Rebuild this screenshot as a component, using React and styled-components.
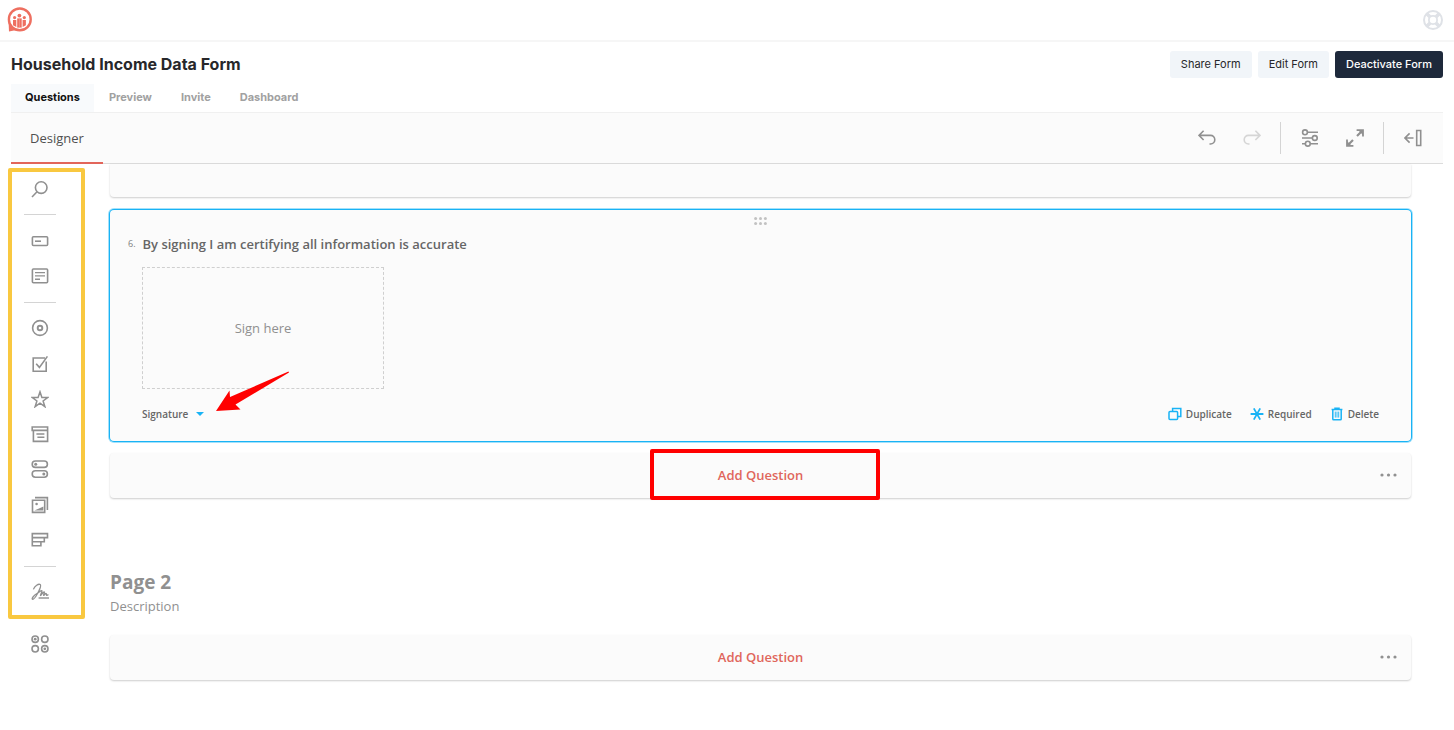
import React from 'react';
import styled, { createGlobalStyle, css } from 'styled-components';

const GlobalStyle = createGlobalStyle`
  * {
    box-sizing: border-box;
  }

  body {
    margin: 0;
    background: #fff;
    color: #27272a;
    font-family: Inter, sans-serif;
  }

  button {
    border: 0;
    padding: 0;
    background: none;
    font: inherit;
    color: inherit;
    cursor: pointer;
  }

  svg {
    display: block;
  }
`;

const surveyFont = css`
  font-family: 'Open Sans', sans-serif;
`;

const TopBar = styled.header`
  display: flex;
  align-items: center;
  justify-content: space-between;
  height: 42px;
  padding: 0 11px 0 7px;
  border-bottom: 2px solid #f6f6f6;
`;

const Page = styled.main`
  padding: 0 11px;
`;

const TitleRow = styled.div`
  display: flex;
  align-items: center;
  justify-content: space-between;
  height: 42px;
  padding-top: 2px;
`;

const Title = styled.h1`
  margin: 0;
  font-size: 16px;
  line-height: 24px;
  font-weight: 700;
`;

const Actions = styled.div`
  display: flex;
  gap: 6px;
`;

const ActionButton = styled.button`
  height: 27px;
  padding: 0 11px;
  border-radius: 3px;
  font-size: 11px;
  font-weight: ${props => (props.$dark ? 500 : 400)};
  background: ${props => (props.$dark ? '#1e293b' : '#f1f5f9')};
  color: ${props => (props.$dark ? '#fff' : '#27272a')};
`;

const Tabs = styled.nav`
  display: flex;
  gap: 1px;
  height: 28px;
`;

const Tab = styled.a`
  padding: 0 14px;
  font-size: 11px;
  line-height: 27px;
  font-weight: 700;
  text-decoration: none;
  color: ${props => (props.$active ? '#111' : '#a1a1a1')};
  background: ${props => (props.$active ? '#f8fafc' : 'transparent')};
`;

const Toolbar = styled.div`
  ${surveyFont}
  display: flex;
  justify-content: space-between;
  height: 52px;
  background: #fbfbfb;
  border-top: 1px solid #f0f0f0;
  border-bottom: 1px solid #dcdcdc;
`;

const DesignerTab = styled.button`
  margin-bottom: -1px;
  padding: 0 19px;
  border-bottom: 2px solid #e2655a;
  font-size: 13px;
  color: #505050;
`;

const Tools = styled.div`
  display: flex;
  align-items: center;
  padding-right: 8px;
`;

const ToolButton = styled.button`
  display: flex;
  justify-content: center;
  width: 45px;
  color: #909090;
  opacity: ${props => (props.disabled ? 0.35 : 1)};
`;

const ToolDivider = styled.span`
  width: 1px;
  height: 32px;
  margin: 0 6px;
  background: #d4d4d4;
`;

const Workspace = styled.div`
  ${surveyFont}
  display: flex;
`;

const Sidebar = styled.aside`
  position: relative;
  flex: 0 0 98px;
  padding: 7px 0 0 13px;
`;

const Toolbox = styled.nav`
  display: flex;
  flex-direction: column;
  width: 32px;
  height: 491px;
`;

const ToolboxItem = styled.button`
  display: flex;
  flex: 1;
  align-items: center;
  justify-content: center;
  color: #909090;
`;

const ToolboxDivider = styled.hr`
  width: 100%;
  height: 1px;
  margin: 8px 0;
  border: 0;
  background: #d4d4d4;
`;

const YellowFrame = styled.div`
  position: absolute;
  top: 4px;
  left: -3px;
  width: 77px;
  height: 451px;
  border: 4px solid #f9c840;
  border-radius: 2px;
  pointer-events: none;
`;

const Canvas = styled.section`
  flex: 1;
  min-width: 0;
  padding: 0 31px 40px 0;
`;

const PreviousCard = styled.div`
  height: 33px;
  margin: 0 1px;
  background: #fbfbfb;
  border-radius: 0 0 4px 4px;
  box-shadow: 0 1px 2px rgba(0, 0, 0, 0.2);
`;

const QuestionCard = styled.article`
  position: relative;
  margin: 13px 1px 12px;
  padding: 7px 32px 17px 32px;
  background: #fbfbfb;
  border-radius: 4px;
  box-shadow: 0 0 0 1px #19b3f5, 0 0 0 2px rgba(25, 179, 245, 0.4);
`;

const DragHandle = styled.button`
  display: block;
  margin: 0 auto;
  color: #c2c2c2;
`;

const QuestionTitle = styled.h2`
  display: flex;
  align-items: center;
  gap: 7px;
  margin: 9px 0 13px -14px;
  font-size: 13px;
  line-height: 20px;
  font-weight: 600;
  color: #666;
`;

const QuestionNumber = styled.span`
  font-size: 9px;
  font-weight: 400;
  color: #808080;
`;

const SignBox = styled.div`
  display: flex;
  align-items: center;
  justify-content: center;
  width: 242px;
  height: 122px;
  border: 1px dashed #cfcfcf;
  font-size: 13px;
  color: #909090;
`;

const CardFooter = styled.footer`
  display: flex;
  align-items: center;
  justify-content: space-between;
  height: 20px;
  margin-top: 15px;
`;

const TypeButton = styled.button`
  display: flex;
  align-items: center;
  gap: 8px;
  font-size: 10px;
  font-weight: 600;
  color: #666;
`;

const CardActions = styled.div`
  display: flex;
  gap: 18px;
`;

const CardAction = styled.button`
  display: flex;
  align-items: center;
  gap: 4px;
  font-size: 10px;
  font-weight: 600;
  color: #666;

  svg {
    color: #19b3f5;
  }
`;

const AddBar = styled.div`
  position: relative;
  display: grid;
  grid-template-columns: 1fr auto 1fr;
  align-items: center;
  height: 45px;
  margin: 0 1px;
  padding: 0 14px 1px;
  background: #fbfbfb;
  border-radius: 4px;
  box-shadow: 0 1px 2px rgba(0, 0, 0, 0.2);
`;

const AddButton = styled.button`
  grid-column: 2;
  font-size: 13px;
  font-weight: 600;
  color: #e0665c;
`;

const MoreButton = styled.button`
  justify-self: end;
  color: #909090;
`;

const RedFrame = styled.div`
  position: absolute;
  top: -4px;
  left: calc(50% - 111px);
  width: 230px;
  height: 51px;
  border: 4px solid #f00;
  border-radius: 2px;
  pointer-events: none;
`;

const RedArrow = styled.svg`
  position: absolute;
  top: 161px;
  left: 106px;
  pointer-events: none;
`;

const PageHeading = styled.div`
  margin: 70px 0 18px 1px;
  color: #909090;

  h2 {
    margin: 0;
    font-size: 19px;
    line-height: 28px;
    font-weight: 700;
  }

  p {
    margin: 0;
    font-size: 13px;
    line-height: 21px;
  }
`;

const Icon = ({ children, size = 18 }) => (
  <svg width={size} height={size} viewBox="0 0 18 18" fill="none" stroke="currentColor" strokeWidth="1.6" aria-hidden="true">
    {children}
  </svg>
);

const Logo = () => (
  <svg width="25" height="26" viewBox="0 0 25 26" aria-label="Logo">
    <circle cx="12.8" cy="12.4" r="10.9" fill="none" stroke="#ee6f60" strokeWidth="2.4" />
    <path d="M1.6 15.5 2 24.6l7.5-1.5-4-3.6z" fill="#ee6f60" />
    <g fill="#ee6f60">
      <circle cx="12.4" cy="8.6" r="1.9" />
      <circle cx="7.6" cy="10.6" r="1.6" />
      <circle cx="17.3" cy="10.6" r="1.6" />
      <path d="M10.2 11.4h4.5v9.2h-4.5z" />
      <path d="M6 13h3.3v7L6 18.2z" />
      <path d="M15.6 13h3.3v5.2l-3.3 1.8z" />
    </g>
    <path d="M12.4 12v8.6" stroke="#f4a59b" strokeWidth=".6" />
  </svg>
);

const HelpIcon = () => (
  <svg width="20" height="20" viewBox="0 0 20 20" fill="none" stroke="#dfe2e7" aria-hidden="true">
    <circle cx="10" cy="10" r="9" strokeWidth="2" />
    <circle cx="10" cy="10" r="4.1" strokeWidth="1.8" />
    <path d="m3.6 3.6 3.5 3.5M16.4 3.6l-3.5 3.5M3.6 16.4l3.5-3.5M16.4 16.4l-3.5-3.5" strokeWidth="3.6" />
  </svg>
);

const UndoIcon = () => (
  <Icon>
    <path d="M5.6 1.8 1 6.4l4.6 4.6M1 6.4h11.5a4.2 4.2 0 0 1 0 8.6h-1" />
  </Icon>
);

const RedoIcon = () => (
  <Icon>
    <path d="M12.4 1.8 17 6.4 12.4 11M17 6.4H5.5a4.2 4.2 0 0 0 0 8.6h1" />
  </Icon>
);

const SettingsIcon = () => (
  <Icon>
    <path d="M6.5 3.3H17M1 9h10M1 14.7h3M9.5 14.7H17M16.5 9H17" />
    <circle cx="4" cy="3.3" r="2.4" />
    <circle cx="13.8" cy="9" r="2.4" />
    <circle cx="6.8" cy="14.7" r="2.4" />
  </Icon>
);

const ExpandIcon = () => (
  <Icon>
    <path d="m11 7 5-5M7 11l-5 5" strokeWidth="2.2" />
    <path d="M10.6 1.2H17v6.4M1 10.4v6.4h6.4" strokeWidth="1.8" />
    <path d="M12 1h5v5zM1 12v5h5z" fill="currentColor" stroke="none" />
  </Icon>
);

const CollapseIcon = () => (
  <Icon>
    <path d="M5.6 4.4 1 9l4.6 4.6M1 9h8.5" />
    <path d="M12.7 1.5h4v15h-4z" />
  </Icon>
);

const toolbox = [
  [
    {
      name: 'Search',
      icon: (
        <>
          <circle cx="10.2" cy="7.6" r="5.8" />
          <path d="M6 11.8 1 17" />
        </>
      ),
    },
  ],
  [
    {
      name: 'Single-Line Input',
      icon: (
        <>
          <rect x="1.4" y="4.7" width="15.2" height="8.8" rx="1" />
          <path d="M4 9.2h6" />
        </>
      ),
    },
    {
      name: 'Long Text',
      icon: (
        <>
          <rect x="1.4" y="2" width="15.2" height="13.8" rx="1" />
          <path d="M4 5.6h10M4 8.9h10M4 12.2h5" strokeWidth="1.4" />
        </>
      ),
    },
  ],
  [
    {
      name: 'Radio Button Group',
      icon: (
        <>
          <circle cx="9" cy="9" r="7.4" />
          <circle cx="9" cy="9" r="2.3" strokeWidth="1.9" />
        </>
      ),
    },
    {
      name: 'Checkboxes',
      icon: (
        <>
          <path d="M14 3H2.2v13.2h13V6.5" />
          <path d="m5.2 8.8 3.2 3.6L16.4 1.4" />
        </>
      ),
    },
    {
      name: 'Rating Scale',
      icon: <path d="m9 1.8 1.9 5.6h6L12.1 11l1.8 5.7L9 13.2l-4.9 3.5L5.9 11 1.1 7.4h6z" strokeWidth="1.5" />,
    },
    {
      name: 'Dropdown',
      icon: (
        <>
          <path d="M1.2 2h15.4v3.4H1.2zM2.4 5.4v11h14.2v-11" />
          <path d="M5.4 9h8M6.4 12.2h7" strokeWidth="1.4" />
        </>
      ),
    },
    {
      name: 'Yes/No',
      icon: (
        <>
          <rect x="1.2" y="1" width="15.2" height="6.4" rx="3.2" />
          <rect x="1.2" y="10.8" width="15.2" height="6.4" rx="3.2" />
          <circle cx="4.7" cy="4.2" r="1.5" fill="currentColor" stroke="none" />
          <circle cx="12.8" cy="14" r="1.5" fill="currentColor" stroke="none" />
        </>
      ),
    },
    {
      name: 'Image Picker',
      icon: (
        <>
          <path d="M1.5 4.2h12.2v12.2H1.5z" />
          <path d="M4 1.6h12.4V14" />
          <circle cx="5.6" cy="8" r="1.3" fill="currentColor" stroke="none" />
          <path d="m3.4 14.6 9-4.2v4.2z" fill="currentColor" stroke="none" />
        </>
      ),
    },
    {
      name: 'Ranking',
      icon: <path d="M1.3 2.6h15.2v4H1.3zM1.3 6.6h12v4.2h-12zM1.3 10.8h8.6v4H1.3z" />,
    },
  ],
  [
    {
      name: 'Signature',
      icon: (
        <>
          <path
            d="M2.4 6.4C3.6 3 7.6.4 9.2 1.6c1.5 1.3-.8 5.600-2.800 9.200-1.600 2.900-3.800 6-5 5.400-1-.7 1.600-4 4.600-5.700 2.100-1.200 4.200-3.300 4.900-2.800.7.6-2 4.500-1.400 4.800.7.3 2.600-4.100 3.700-3.700.9.4-1.200 3.300-.5 3.600.7.3 1.500-2.200 2.400-1.900.8.3 0 1.700.7 1.900.5.1 1-.3 1.600-.8"
            strokeWidth="1.3"
          />
          <path d="M7.600 15h10.400" strokeWidth="1.4" />
        </>
      ),
    },
  ],
  [
    {
      name: 'Other',
      icon: (
        <>
          <circle cx="4.2" cy="4.2" r="3.2" />
          <circle cx="13.8" cy="4.2" r="3.2" />
          <circle cx="4.2" cy="13.8" r="3.2" />
          <circle cx="13.8" cy="13.8" r="3.2" />
          <circle cx="4.2" cy="4.2" r="1.4" fill="currentColor" stroke="none" />
          <circle cx="13.8" cy="13.8" r="1.4" fill="currentColor" stroke="none" />
        </>
      ),
    },
  ],
];

const Dots = () => (
  <svg width="17" height="4" viewBox="0 0 17 4" fill="currentColor" aria-hidden="true">
    <circle cx="2" cy="2" r="1.6" />
    <circle cx="8.5" cy="2" r="1.6" />
    <circle cx="15" cy="2" r="1.6" />
  </svg>
);

const AddQuestion = ({ children }) => (
  <AddBar>
    <AddButton>Add Question</AddButton>
    <MoreButton aria-label="More question types">
      <Dots />
    </MoreButton>
    {children}
  </AddBar>
);

const App = () => (
  <>
    <GlobalStyle />
    <TopBar>
      <Logo />
      <button aria-label="Help">
        <HelpIcon />
      </button>
    </TopBar>
    <Page>
      <TitleRow>
        <Title>Household Income Data Form</Title>
        <Actions>
          <ActionButton>Share Form</ActionButton>
          <ActionButton>Edit Form</ActionButton>
          <ActionButton $dark>Deactivate Form</ActionButton>
        </Actions>
      </TitleRow>
      <Tabs>
        <Tab href="#questions" $active>
          Questions
        </Tab>
        <Tab href="#preview">Preview</Tab>
        <Tab href="#invite">Invite</Tab>
        <Tab href="#dashboard">Dashboard</Tab>
      </Tabs>
      <Toolbar>
        <DesignerTab>Designer</DesignerTab>
        <Tools>
          <ToolButton aria-label="Undo">
            <UndoIcon />
          </ToolButton>
          <ToolButton aria-label="Redo" disabled>
            <RedoIcon />
          </ToolButton>
          <ToolDivider />
          <ToolButton aria-label="Settings">
            <SettingsIcon />
          </ToolButton>
          <ToolButton aria-label="Expand">
            <ExpandIcon />
          </ToolButton>
          <ToolDivider />
          <ToolButton aria-label="Show panel">
            <CollapseIcon />
          </ToolButton>
        </Tools>
      </Toolbar>
      <Workspace>
        <Sidebar>
          <Toolbox>
            {toolbox.map((group, index) => (
              <React.Fragment key={group[0].name}>
                {index > 0 && <ToolboxDivider />}
                {group.map(item => (
                  <ToolboxItem key={item.name} aria-label={item.name}>
                    <Icon>{item.icon}</Icon>
                  </ToolboxItem>
                ))}
              </React.Fragment>
            ))}
          </Toolbox>
          <YellowFrame />
        </Sidebar>
        <Canvas>
          <PreviousCard />
          <QuestionCard>
            <DragHandle aria-label="Move question">
              <svg width="13" height="8" viewBox="0 0 13 8" fill="currentColor" aria-hidden="true">
                <circle cx="1.6" cy="1.6" r="1.5" />
                <circle cx="6.5" cy="1.6" r="1.5" />
                <circle cx="11.4" cy="1.6" r="1.5" />
                <circle cx="1.6" cy="6.4" r="1.5" />
                <circle cx="6.5" cy="6.4" r="1.5" />
                <circle cx="11.4" cy="6.4" r="1.5" />
              </svg>
            </DragHandle>
            <QuestionTitle>
              <QuestionNumber>6.</QuestionNumber>
              By signing I am certifying all information is accurate
            </QuestionTitle>
            <SignBox>Sign here</SignBox>
            <CardFooter>
              <TypeButton>
                Signature
                <svg width="8" height="4" viewBox="0 0 8 4" fill="#19b3f5" aria-hidden="true">
                  <path d="M0 0h8L4 4z" />
                </svg>
              </TypeButton>
              <CardActions>
                <CardAction>
                  <svg width="14" height="14" viewBox="0 0 14 14" fill="none" stroke="currentColor" strokeWidth="1.5" aria-hidden="true">
                    <path d="M4.6 4V1.6h8.2v7.8H10" />
                    <rect x="1" y="4.4" width="8.6" height="8.2" rx="1" />
                  </svg>
                  Duplicate
                </CardAction>
                <CardAction>
                  <svg width="14" height="14" viewBox="0 0 14 14" fill="none" stroke="currentColor" strokeWidth="1.8" aria-hidden="true">
                    <path d="M.6 7h12.8M3.8 1.4l6.4 11.2M10.2 1.4 3.8 12.6" />
                  </svg>
                  Required
                </CardAction>
                <CardAction>
                  <svg width="14" height="14" viewBox="0 0 14 14" fill="none" stroke="currentColor" strokeWidth="1.5" aria-hidden="true">
                    <path d="M1.6 2.4h10.8M5 2V1.2h4V2M2.8 2.6V12a.8.8 0 0 0 .8.8h6.8a.8.8 0 0 0 .8-.8V2.6" />
                    <path d="M5.3 4.6v6M7 4.6v6M8.7 4.6v6" strokeWidth=".9" />
                  </svg>
                  Delete
                </CardAction>
              </CardActions>
            </CardFooter>
            <RedArrow width="74" height="42" viewBox="0 0 74 42" fill="#f00" aria-hidden="true">
              <path d="M72.5.5 73 1.500 19.500 33.500 24.500 38.500 0 40 13.500 19.500 14 26z" />
            </RedArrow>
          </QuestionCard>
          <AddQuestion>
            <RedFrame />
          </AddQuestion>
          <PageHeading>
            <h2>Page 2</h2>
            <p>Description</p>
          </PageHeading>
          <AddQuestion />
        </Canvas>
      </Workspace>
    </Page>
  </>
);

export default App;
